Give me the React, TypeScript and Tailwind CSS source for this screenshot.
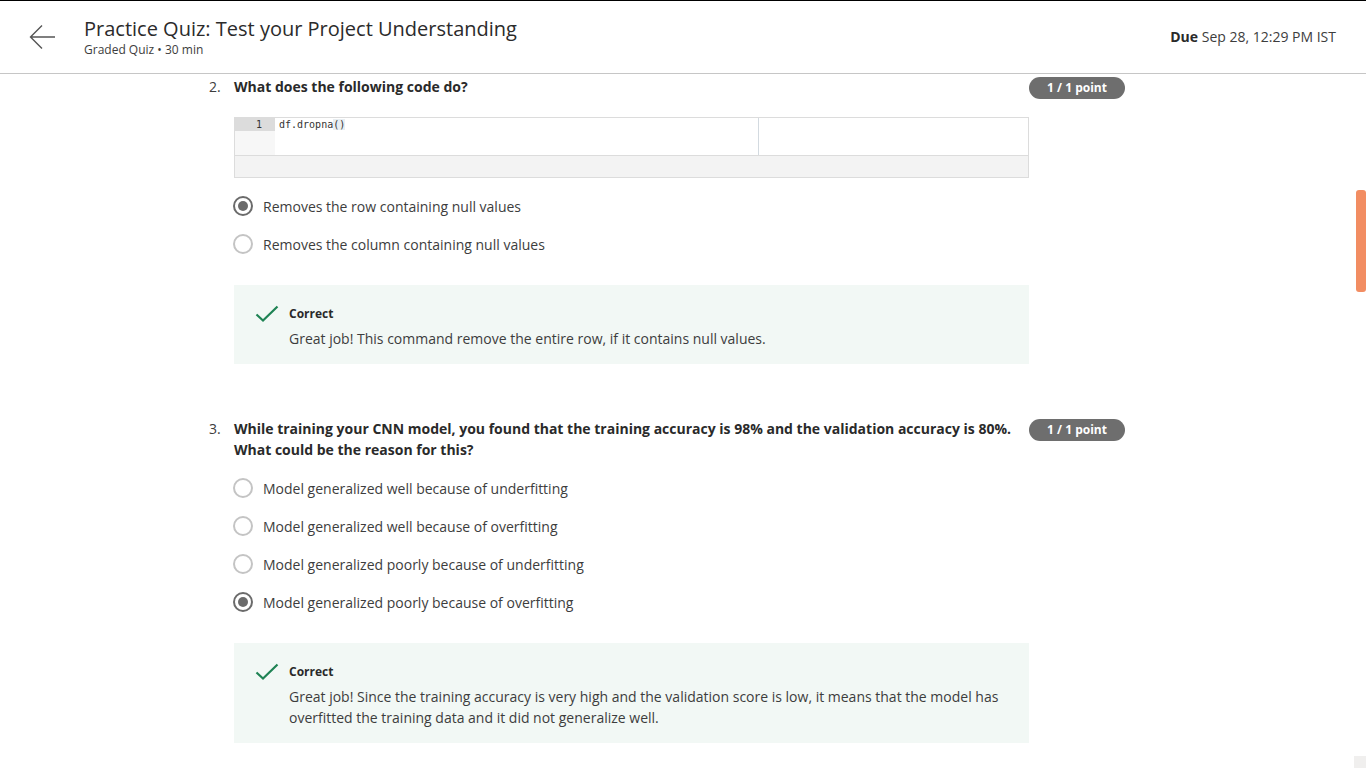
import React from "react";

const font = { fontFamily: '"Open Sans", "Noto Sans", sans-serif' };

function Radio({ checked }: { checked: boolean }) {
  return checked ? (
    <span className="flex h-[20px] w-[20px] items-center justify-center rounded-full border-2 border-[#6b6b6b]">
      <span className="h-[10px] w-[10px] rounded-full bg-[#6b6b6b]" />
    </span>
  ) : (
    <span className="h-[20px] w-[20px] rounded-full border-2 border-[#c4c4c4]" />
  );
}

function Option({ label, checked }: { label: string; checked?: boolean }) {
  return (
    <div className="flex h-[38px] items-center">
      <span className="-ml-[1px] flex w-[30px] shrink-0">
        <Radio checked={!!checked} />
      </span>
      <span className="text-[14px] leading-[21px] text-[#3d3d3d]">{label}</span>
    </div>
  );
}

function Badge() {
  return (
    <div className="flex h-[22px] w-[96px] items-center justify-center rounded-full bg-[#6e6e6e] text-[12px] font-bold text-white">
      1 / 1 point
    </div>
  );
}

function Feedback({ lines }: { lines: string[] }) {
  return (
    <div className="flex bg-[#f2f8f5] pb-[15px] pl-[21px] pt-[20px]">
      <svg width="24" height="18" viewBox="0 0 24 18" className="mr-[10px] mt-[0px] shrink-0">
        <path d="M1.5 9.5 L8 15.5 L22.5 1.5" fill="none" stroke="#1f8354" strokeWidth="2.2" />
      </svg>
      <div>
        <div className="text-[12px] font-bold leading-[18px] text-[#2a2a2a]">Correct</div>
        <div className="mt-[5px] text-[14px] leading-[21px] text-[#3d3d3d]">
          {lines.map((l, i) => (
            <div key={i}>{l}</div>
          ))}
        </div>
      </div>
    </div>
  );
}

function CodeBox() {
  return (
    <div className="border border-[#dcdcdc]">
      <div className="flex h-[38px] border-b border-[#dcdcdc]">
        <div className="w-[40px] bg-[#f7f7f7]">
          <div className="h-[13px] bg-[#dcdcdc] pr-[13px] text-right text-[10px] leading-[13px] text-[#333]" style={{ fontFamily: '"DejaVu Sans Mono", monospace' }}>
            1
          </div>
        </div>
        <div className="w-[484px] border-r border-[#d3dae0] pl-[4px] text-[10px] leading-[13px] text-[#333]" style={{ fontFamily: '"DejaVu Sans Mono", monospace' }}>
          df.dropna<span className="bg-[#e8eef2]">()</span>
        </div>
        <div className="flex-1" />
      </div>
      <div className="h-[21px] bg-[#f3f3f3]" />
    </div>
  );
}

export default function App() {
  return (
    <div className="relative h-[768px] w-[1366px] overflow-hidden bg-white" style={font}>
      <header className="flex h-[74px] items-start border-b border-t border-b-[#c6c6c6] border-t-black">
        <svg width="28" height="26" viewBox="0 0 28 26" className="ml-[29px] mt-[23px]">
          <path d="M26 13 H2 M13 1.5 L1.5 13 L13 24.5" fill="none" stroke="#555" strokeWidth="1.4" />
        </svg>
        <div className="ml-[27px] mt-[14px]">
          <div className="text-[20px] leading-[27px] text-[#2b2b2b]">Practice Quiz: Test your Project Understanding</div>
          <div className="text-[12px] leading-[16px] text-[#3d3d3d]">Graded Quiz • 30 min</div>
        </div>
        <div className="ml-auto mr-[30px] mt-[25px] text-[14px] leading-[21px] text-[#3d3d3d]">
          <span className="font-bold text-[#2a2a2a]">Due</span> Sep 28, 12:29 PM IST
        </div>
      </header>

      <main className="ml-[209px] w-[916px] pt-[2px]">
        <div className="flex">
          <div className="w-[25px] shrink-0 text-[14px] leading-[21px] text-[#3d3d3d]">2.</div>
          <div className="w-[795px] shrink-0">
            <div className="text-[14px] font-bold leading-[21px] text-[#2a2a2a]">What does the following code do?</div>
            <div className="mt-[20px]">
              <CodeBox />
            </div>
            <div className="mt-[9px]">
              <Option label="Removes the row containing null values" checked />
              <Option label="Removes the column containing null values" />
            </div>
            <div className="mt-[22px]">
              <Feedback lines={["Great job! This command remove the entire row, if it contains null values."]} />
            </div>
          </div>
          <div className="pt-[1px]">
            <Badge />
          </div>
        </div>

        <div className="mt-[54px] flex">
          <div className="w-[25px] shrink-0 text-[14px] leading-[21px] text-[#3d3d3d]">3.</div>
          <div className="w-[795px] shrink-0">
            <div className="text-[14px] font-bold leading-[21px] text-[#2a2a2a]">
              While training your CNN model, you found that the training accuracy is 98% and the validation accuracy is 80%.
              <br />
              What could be the reason for this?
            </div>
            <div className="mt-[9px]">
              <Option label="Model generalized well because of underfitting" />
              <Option label="Model generalized well because of overfitting" />
              <Option label="Model generalized poorly because of underfitting" />
              <Option label="Model generalized poorly because of overfitting" checked />
            </div>
            <div className="mt-[22px]">
              <Feedback
                lines={[
                  "Great job! Since the training accuracy is very high and the validation score is low, it means that the model has",
                  "overfitted the training data and it did not generalize well.",
                ]}
              />
            </div>
          </div>
          <div className="pt-[1px]">
            <Badge />
          </div>
        </div>
      </main>

      <div className="absolute right-0 top-[190px] h-[102px] w-[10px] rounded-[3px] bg-[#f28d62]" />
      <div className="absolute bottom-0 right-0 h-[12px] w-[12px] bg-[#f0efee]" />
    </div>
  );
}
